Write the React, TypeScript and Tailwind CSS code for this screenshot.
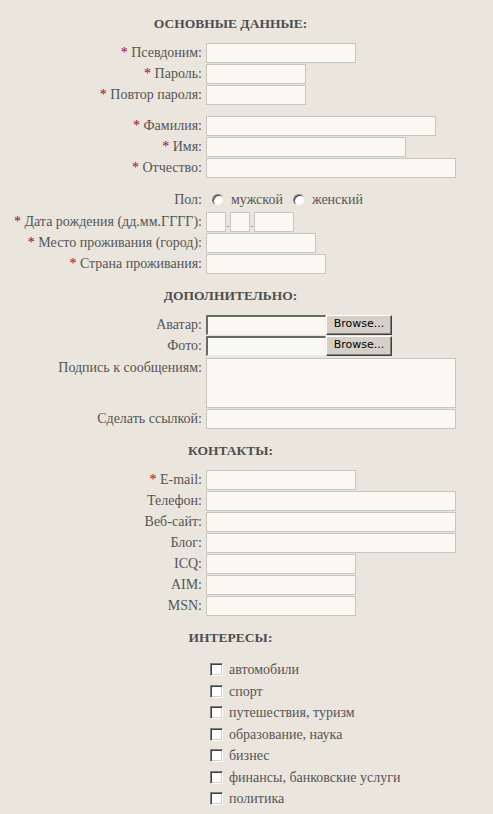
import type { ReactNode } from 'react';

const font = { fontFamily: '"Liberation Serif", "Times New Roman", serif' };

function Req() {
  return <span className="text-[#a3002d]">* </span>;
}

function Header({ children }: { children: ReactNode }) {
  return (
    <div className="h-[40px] pt-[14px] text-center text-[13.5px] leading-[16px] font-bold text-[#4f4f4f]">
      {children}
    </div>
  );
}

function Field({ w, h = 20 }: { w: number; h?: number }) {
  return (
    <div
      className="bg-[#f9f8f2] border border-[#c9c5b9] shrink-0"
      style={{ width: w, height: h }}
    />
  );
}

function Row({
  label,
  req,
  children,
  top,
}: {
  label: string;
  req?: boolean;
  children: ReactNode;
  top?: boolean;
}) {
  return (
    <div className={`flex ${top ? 'items-start' : 'items-center'} min-h-[21px]`}>
      <div className="w-[202px] shrink-0 text-right leading-[21px] whitespace-nowrap">
        {req && <Req />}
        {label}
      </div>
      <div className={`ml-[4px] flex items-center ${top ? 'pt-[1px]' : ''}`}>{children}</div>
    </div>
  );
}

function FileInput() {
  return (
    <div className="flex items-center">
      <div className="w-[120px] h-[20px] bg-[#f9f8f2] border-t-2 border-l-2 border-t-[#6b6b66] border-l-[#6b6b66] border-b border-r border-b-[#f0eee8] border-r-[#f0eee8]" />
      <div
        className="w-[66px] h-[20px] bg-[#d4d0c8] border border-t-white border-l-white border-b-[#404040] border-r-[#404040] shadow-[inset_-1px_-1px_0_#808080] flex items-center justify-center text-[11px] text-black"
        style={{ fontFamily: '"DejaVu Sans", Tahoma, sans-serif' }}
      >
        Browse...
      </div>
    </div>
  );
}

function Radio() {
  return (
    <span className="inline-block w-[12px] h-[12px] rounded-full bg-white border border-t-[#808080] border-l-[#808080] border-b-[#e8e6e0] border-r-[#e8e6e0] shadow-[inset_1px_1px_0_#404040]" />
  );
}

function Checkbox() {
  return (
    <span className="inline-block w-[13px] h-[13px] bg-white border border-t-[#808080] border-l-[#808080] border-b-white border-r-white shadow-[inset_1px_1px_0_#404040,inset_-1px_-1px_0_#d4d0c8] shrink-0" />
  );
}

const interests = [
  'автомобили',
  'спорт',
  'путешествия, туризм',
  'образование, наука',
  'бизнес',
  'финансы, банковские услуги',
  'политика',
  '',
];

export default function App() {
  return (
    <div className="min-h-screen bg-[#eae6dd] text-[#555555] text-[14px]" style={font}>
      <div className="w-[461px] pt-[2px]">
        <Header>ОСНОВНЫЕ ДАННЫЕ:</Header>
        <Row label="Псевдоним:" req>
          <Field w={150} />
        </Row>
        <Row label="Пароль:" req>
          <Field w={100} />
        </Row>
        <Row label="Повтор пароля:" req>
          <Field w={100} />
        </Row>

        <div className="h-[10px]" />
        <Row label="Фамилия:" req>
          <Field w={230} />
        </Row>
        <Row label="Имя:" req>
          <Field w={200} />
        </Row>
        <Row label="Отчество:" req>
          <Field w={250} />
        </Row>

        <div className="h-[10px]" />
        <div className="flex items-center h-[23px]">
          <div className="w-[202px] text-right">Пол:</div>
          <div className="ml-[10px] flex items-center">
            <Radio />
            <span className="ml-[7px]">мужской</span>
            <span className="ml-[10px] flex items-center">
              <Radio />
            </span>
            <span className="ml-[7px]">женский</span>
          </div>
        </div>
        <Row label="Дата рождения (дд.мм.ГГГГ):" req>
          <Field w={20} />
          <span className="w-[4px] text-center self-end leading-[16px] text-[10px]">.</span>
          <Field w={20} />
          <span className="w-[4px] text-center self-end leading-[16px] text-[10px]">.</span>
          <Field w={40} />
        </Row>
        <Row label="Место проживания (город):" req>
          <Field w={110} />
        </Row>
        <Row label="Страна проживания:" req>
          <Field w={120} />
        </Row>

        <Header>ДОПОЛНИТЕЛЬНО:</Header>
        <Row label="Аватар:">
          <FileInput />
        </Row>
        <Row label="Фото:">
          <FileInput />
        </Row>
        <div className="h-[1px]" />
        <Row label="Подпись к сообщениям:" top>
          <Field w={250} h={50} />
        </Row>
        <Row label="Сделать ссылкой:">
          <Field w={250} />
        </Row>

        <Header>КОНТАКТЫ:</Header>
        <Row label="E-mail:" req>
          <Field w={150} />
        </Row>
        <Row label="Телефон:">
          <Field w={250} />
        </Row>
        <Row label="Веб-сайт:">
          <Field w={250} />
        </Row>
        <Row label="Блог:">
          <Field w={250} />
        </Row>
        <Row label="ICQ:">
          <Field w={150} />
        </Row>
        <Row label="AIM:">
          <Field w={150} />
        </Row>
        <Row label="MSN:">
          <Field w={150} />
        </Row>

        <Header>ИНТЕРЕСЫ:</Header>
        <div className="pl-[210px] pt-[3px]">
          {interests.map((item, i) => (
            <div key={i} className="flex items-center h-[21.5px] whitespace-nowrap">
              <Checkbox />
              {item && <span className="ml-[6px]">{item}</span>}
            </div>
          ))}
        </div>
      </div>
    </div>
  );
}
